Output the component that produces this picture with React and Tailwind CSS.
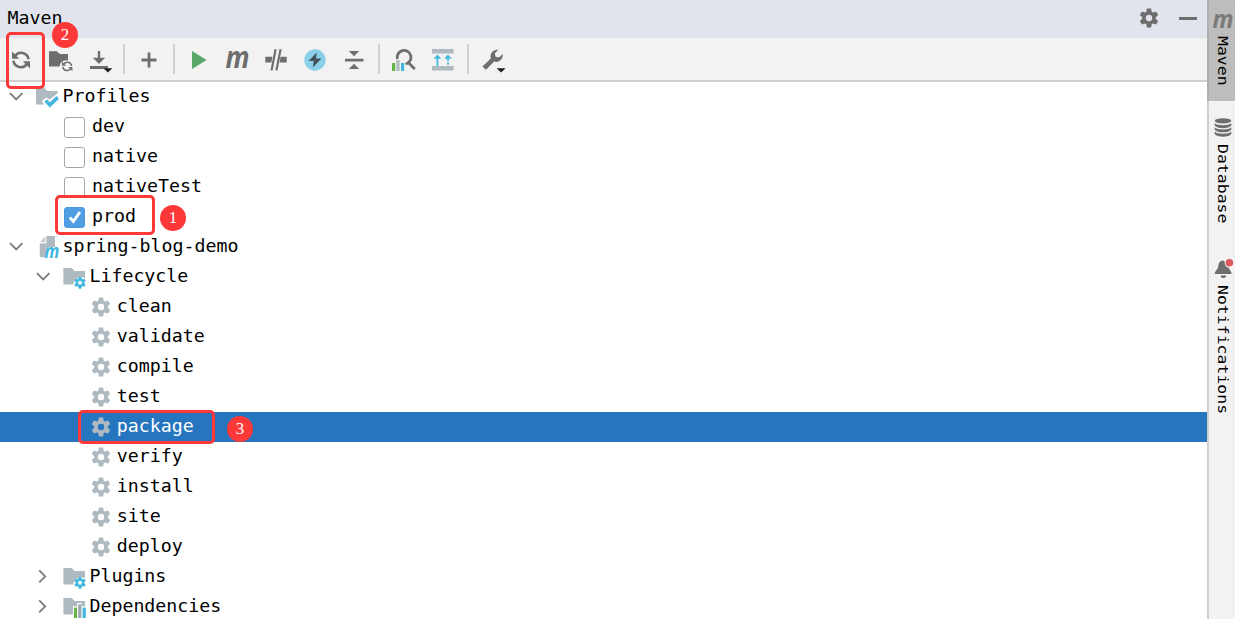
import clsx from "clsx";

const TEETH = [0, 60, 120, 180, 240, 300];

function Gear({ cx = 11, cy = 11, scale = 1, color = "#afb9c0" }) {
    return (
        <g transform={`translate(${cx} ${cy}) scale(${scale})`}>
            <circle r="5" fill="none" stroke={color} strokeWidth="3.6" />
            {TEETH.map((deg) => (
                <path key={deg} d="M-2.1 -9.4H2.1L2.8 -5.5H-2.8Z" fill={color} transform={`rotate(${deg})`} />
            ))}
        </g>
    );
}

function Icon({ children, className }) {
    return (
        <svg viewBox="0 0 22 22" className={clsx("h-[22px] w-[22px] shrink-0 overflow-visible", className)}>
            {children}
        </svg>
    );
}

function MLetter({ x, y, size, width, color }) {
    return (
        <text
            x={x}
            y={y}
            fill={color}
            fontSize={size}
            textLength={width}
            lengthAdjust="spacingAndGlyphs"
            className="font-['Open_Sans',sans-serif] font-bold italic"
        >
            m
        </text>
    );
}

// two arcs with filled arrow heads, used alone and as the folder badge
function SyncArrows({ transform }) {
    return (
        <g transform={transform}>
            <path d="M4.8 7.2A7.6 7.6 0 0 1 18.6 10.2M17.2 14.8A7.6 7.6 0 0 1 3.4 11.8" fill="none" stroke="#6e6e6e" strokeWidth="2.6" />
            <path d="M2 2.6V9.8H9.2ZM20 19.4V12.2H12.8Z" fill="#6e6e6e" />
        </g>
    );
}

/* ---------- toolbar icons ---------- */

const ReloadIcon = () => (
    <Icon>
        <SyncArrows />
    </Icon>
);

const FolderSyncIcon = () => (
    <Icon>
        <path d="M0 2.3H7.8L11 5H19V11.6C14 10.6 11 13 10.6 17.5H0Z" fill="#6e6e6e" />
        <SyncArrows transform="translate(11.8 11) scale(0.58)" />
    </Icon>
);

const DownloadIcon = () => (
    <Icon>
        <path d="M11 2V10" stroke="#6e6e6e" strokeWidth="2.4" />
        <path d="M4.8 8.8H17.2L11 15ZM2 17H20V20H2Z" fill="#6e6e6e" />
        <path d="M15.4 19.3H24.4L19.9 23.6Z" fill="#231f20" />
    </Icon>
);

const PlusIcon = () => (
    <Icon>
        <path d="M11 3.5V18.5M3.5 11H18.5" stroke="#6e6e6e" strokeWidth="2.8" />
    </Icon>
);

const RunIcon = () => (
    <Icon>
        <path d="M5 2L19.6 11L5 20Z" fill="#59a869" />
    </Icon>
);

const MavenIcon = () => (
    <Icon>
        <MLetter x={-0.5} y={18.8} size={31} width={24} color="#6e6e6e" />
    </Icon>
);

const SkipTestsIcon = () => (
    <Icon>
        <path d="M0.3 7.8H7.4L6.4 13.6H0.3ZM15.6 7.8H21.7V13.6H14.6Z" fill="#6e6e6e" />
        <path d="M10.6 0.2L6.6 21.4M15.6 0.2L11.4 21.4" stroke="#6e6e6e" strokeWidth="2.2" />
    </Icon>
);

const OfflineIcon = () => (
    <Icon>
        <circle cx="11" cy="11" r="10.7" fill="#88cfe7" />
        <path d="M12.8 3.4L4.6 12H9.8L8.8 18.6L17.4 9.6H12Z" fill="#43525a" />
    </Icon>
);

const CollapseIcon = () => (
    <Icon>
        <path d="M5.8 2H16.2L11 7.2ZM2 9.7H20.5V12.5H2ZM5.8 20H16.2L11 14.8Z" fill="#6e6e6e" />
    </Icon>
);

const AnalyzeIcon = () => (
    <Icon>
        <path d="M5.4 10A6.9 6.9 0 1 1 13.6 15M16 13.2L22.8 20" fill="none" stroke="#6e6e6e" strokeWidth="2.8" />
        <path d="M0 14H3.2V22H0Z" fill="#62b543" />
        <path d="M4.4 11H7.6V22H4.4Z" fill="#afb9c0" />
        <path d="M9 14H12.2V22H9Z" fill="#40b6e0" />
    </Icon>
);

const ShowDepsIcon = () => (
    <Icon>
        <path d="M1 0H22.6V4.6H1ZM1 17H22.6V21.4H1Z" fill="#afb9c0" />
        <path d="M6.4 8V17" stroke="#40b6e0" strokeWidth="1.8" />
        <path d="M17 9.4V17" stroke="#40b6e0" strokeWidth="1.8" strokeDasharray="2.6 1.2" />
        <path d="M2.6 9.8L6.4 5.6L10.2 9.8ZM13.2 9.8L17 5.6L20.8 9.8Z" fill="#40b6e0" />
    </Icon>
);

const WrenchIcon = () => (
    <Icon>
        <path
            d="M0.4 17.4L8.8 9.4C7.6 4.6 11 0.2 16.2 0.8L12.8 4.4L13.6 7.8L17 8.6L20.6 5C21.4 10.2 17 14 12.2 12.6L4 20.8Z"
            fill="#6e6e6e"
        />
        <path d="M14.6 19.3H23.6L19.1 23.6Z" fill="#231f20" />
    </Icon>
);

/* ---------- tree icons ---------- */

const FOLDER = "M0 2H8.4L11.2 5H21.6V18.6H0Z";

const ProfilesIcon = () => (
    <Icon>
        <path d={FOLDER} fill="#afb9c0" />
        <path d="M5.8 15.2L10 11.4L13.6 13.6L21.6 7.2V19H8.4Z" fill="#fff" />
        <path d="M9.6 14.6L13.9 19L21.6 11.4" fill="none" stroke="#40b6e0" strokeWidth="3.6" />
    </Icon>
);

const FolderGearIcon = () => (
    <Icon>
        <path d="M0.4 2H8.8L11.6 5H22V12C16.9 9.8 11.2 12 10.2 18.6H0.4Z" fill="#afb9c0" />
        <Gear cx={17} cy={16.8} scale={0.62} color="#40b6e0" />
    </Icon>
);

const FolderBarsIcon = () => (
    <Icon>
        <path d="M0.4 2H8.8L11.6 5H22V10.2H18.4V7H14.2V10.2H10V18.6H0.4Z" fill="#afb9c0" />
        <path d="M11 11.6H14V22H11Z" fill="#62b543" />
        <path d="M15.2 8.4H18.4V22H15.2Z" fill="#9aa7b0" />
        <path d="M19.6 11.6H22.8V22H19.6Z" fill="#40b6e0" />
    </Icon>
);

const ModuleIcon = () => (
    <Icon>
        <path d="M10.4 0H19V11H10V21.2H3.8V7.6H10.4Z" fill="#afb9c0" />
        <path d="M4 6.2L9.2 0.6V6.2Z" fill="#c0c8cd" />
        <MLetter x={8.6} y={22.2} size={20} width={14.8} color="#40b6e0" />
    </Icon>
);

const Chevron = ({ open }) => (
    <Icon>
        <path
            d={open ? "M5 7.2L11.2 13.4L17.4 7.2" : "M7.2 4.4L13.2 10.4L7.2 16.4"}
            fill="none"
            stroke="#7b7b7b"
            strokeWidth="1.8"
        />
    </Icon>
);

const Checkbox = ({ checked }) => (
    <span
        className={clsx(
            "flex h-[21px] w-[21px] shrink-0 items-center justify-center rounded-[3px] border",
            checked ? "border-[#4b97df] bg-[#4f9ee3]" : "border-[#a6a6a6] bg-white"
        )}
    >
        {checked && (
            <svg viewBox="0 0 14 14" className="h-3.5 w-3.5 shrink-0">
                <path d="M1.8 7.4L5.4 11.4L12 2" fill="none" stroke="#fff" strokeWidth="2.8" />
            </svg>
        )}
    </span>
);

/* ---------- data ---------- */

const rows = [
    { type: "root", label: "Profiles", icon: <ProfilesIcon /> },
    { type: "profile", label: "dev" },
    { type: "profile", label: "native" },
    { type: "profile", label: "nativeTest" },
    { type: "profile", label: "prod", checked: true, mark: "1" },
    { type: "root", label: "spring-blog-demo", icon: <ModuleIcon /> },
    { type: "group", label: "Lifecycle", open: true, icon: <FolderGearIcon /> },
    { type: "goal", label: "clean" },
    { type: "goal", label: "validate" },
    { type: "goal", label: "compile" },
    { type: "goal", label: "test" },
    { type: "goal", label: "package", selected: true, mark: "3" },
    { type: "goal", label: "verify" },
    { type: "goal", label: "install" },
    { type: "goal", label: "site" },
    { type: "goal", label: "deploy" },
    { type: "group", label: "Plugins", icon: <FolderGearIcon /> },
    { type: "group", label: "Dependencies", icon: <FolderBarsIcon /> },
];

function Badge({ children, className }) {
    return (
        <span
            className={clsx(
                "absolute z-10 flex h-[26px] w-[26px] items-center justify-center rounded-full bg-[#fd3838] pb-px font-['Liberation_Serif',serif] text-[17px] leading-none text-white",
                className
            )}
        >
            {children}
        </span>
    );
}

const Outline = ({ className }) => (
    <span className={clsx("absolute z-10 rounded-[5px] border-[3px] border-[#fd3838]", className)} />
);

function TreeRow({ row }) {
    const { type, label, icon, open, checked, selected } = row;
    return (
        <div className={clsx("relative flex h-[30px] shrink-0 items-center", selected ? "bg-[#2675bf] text-white" : "text-black")}>
            {type === "root" && (
                <div className="flex items-center pl-[5px]">
                    <Chevron open />
                    <span className="ml-[9px] mr-[4.6px] flex">{icon}</span>
                </div>
            )}
            {type === "group" && (
                <div className="flex items-center pl-8">
                    <Chevron open={open} />
                    <span className="ml-[9px] mr-[4.4px] flex">{icon}</span>
                </div>
            )}
            {type === "profile" && (
                <div className="flex pl-16 pr-[7px]">
                    <Checkbox checked={checked} />
                </div>
            )}
            {type === "goal" && (
                <div className="flex pl-[90px] pr-[4.8px]">
                    <Icon>
                        <Gear />
                    </Icon>
                </div>
            )}
            <span className="pb-[3px] leading-[27px]">{label}</span>

            {row.mark === "1" && (
                <>
                    <Outline className="-top-[7px] left-[55px] h-[40px] w-[100px]" />
                    <Badge className="left-[160px] top-[3px]">1</Badge>
                </>
            )}
            {row.mark === "3" && (
                <>
                    <Outline className="-top-[2px] left-[78px] h-[34px] w-[137px]" />
                    <Badge className="left-[227px] top-[4px]">3</Badge>
                </>
            )}
        </div>
    );
}

const Separator = ({ className }) => <span className={clsx("-mt-[2px] h-[30px] w-[2px] shrink-0 bg-[#cfcfcf]", className)} />;

function Toolbar() {
    return (
        <div className="relative flex h-11 shrink-0 items-center border-b-2 border-[#cfcfcf] bg-[#f2f2f2] pl-[10px] pt-[2px]">
            <div className="flex gap-[17px]">
                <ReloadIcon />
                <FolderSyncIcon />
                <DownloadIcon />
            </div>
            <Separator className="mx-[13px]" />
            <PlusIcon />
            <Separator className="ml-[13px] mr-3" />
            <div className="flex gap-[17px]">
                <RunIcon />
                <MavenIcon />
                <SkipTestsIcon />
                <OfflineIcon />
                <CollapseIcon />
            </div>
            <Separator className="ml-[13px] mr-3" />
            <div className="flex gap-[17px]">
                <AnalyzeIcon />
                <ShowDepsIcon />
            </div>
            <Separator className="ml-[14px] mr-[13px]" />
            <WrenchIcon />

            <Outline className="-top-[6px] left-[6px] h-[57px] w-[39px]" />
            <Badge className="-top-[16px] left-[52px]">2</Badge>
        </div>
    );
}

function SideTab({ icon, label, className }) {
    return (
        <div className={clsx("flex flex-col items-center", className)}>
            {icon}
            <span className="scale-x-[0.82] text-[16.5px] leading-[20px] [writing-mode:vertical-rl]">{label}</span>
        </div>
    );
}

export default function App() {
    return (
        <div className="flex h-[619px] w-[1235px] overflow-hidden bg-white font-['DejaVu_Sans_Mono',monospace] text-[18.27px] text-black">
            <main className="flex min-w-0 flex-1 flex-col">
                <header className="flex h-[38px] shrink-0 items-center bg-[#e1e4ec] pl-[7.6px] pr-[10px]">
                    <span className="flex-1 pb-[2px] leading-[36px]">Maven</span>
                    <Icon className="mr-[19px]">
                        <Gear color="#6e6e6e" cy={10} />
                    </Icon>
                    <span className="mb-[2px] h-[3px] w-[18px] bg-[#6e6e6e]" />
                </header>
                <Toolbar />
                <div className="flex min-h-0 flex-1 flex-col">
                    {rows.map((row) => (
                        <TreeRow key={row.label} row={row} />
                    ))}
                </div>
            </main>

            <aside className="flex w-7 shrink-0 flex-col border-l-2 border-[#cfcfcf] bg-[#f2f2f2]">
                <SideTab
                    label="Maven"
                    className="-ml-[2px] h-[101px] border-l-2 border-[#b0b0b0] bg-[#bdbdbd] pt-[9px]"
                    icon={
                        <Icon className="mb-[5px]">
                            <MLetter x={1.4} y={18.8} size={25} width={21} color="#7a7a7a" />
                        </Icon>
                    }
                />
                <SideTab
                    label="Database"
                    className="h-[148px] pt-[17px]"
                    icon={
                        <Icon className="mb-[4px]">
                            <ellipse cx="12" cy="2.8" rx="8.3" ry="2.6" fill="#6e6e6e" />
                            <path
                                d="M3.7 5C6 8 18 8 20.3 5V7.6C18 11 6 11 3.7 7.6ZM3.7 9.2C6 12.2 18 12.2 20.3 9.2V11.8C18 15.2 6 15.2 3.7 11.8ZM3.7 13.4C6 16.4 18 16.4 20.3 13.4V16C18 19.6 6 19.6 3.7 16Z"
                                fill="#6e6e6e"
                            />
                        </Icon>
                    }
                />
                <SideTab
                    label="Notifications"
                    className="pt-[9px]"
                    icon={
                        <Icon className="mb-[5px]">
                            <path d="M12.4 2.4C7.8 2.8 7.2 6.4 7.2 9.6L3.8 14.4V16H20.4V14.4L17.4 9.6V7L12.4 2.4ZM9.4 17.4H15.4C14.6 20.8 10.2 20.8 9.4 17.4Z" fill="#6e6e6e" />
                            <circle cx="18.4" cy="4.8" r="4.8" fill="#f2f2f2" />
                            <circle cx="18.4" cy="4.8" r="3.8" fill="#db5860" />
                        </Icon>
                    }
                />
            </aside>
        </div>
    );
}
